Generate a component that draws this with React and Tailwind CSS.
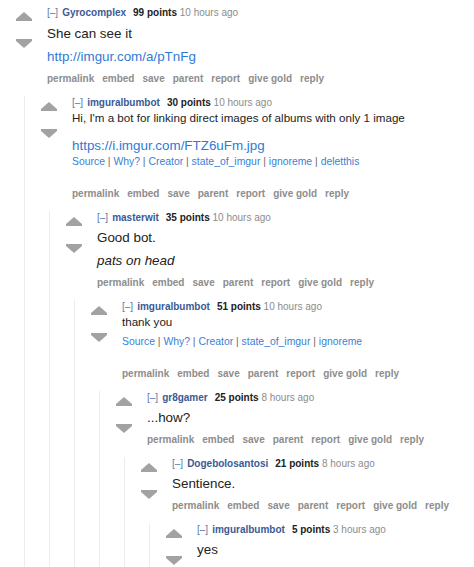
import React from 'react';

const FONT = { fontFamily: '"Liberation Sans", Arial, sans-serif' };

const ACTIONS = ['permalink', 'embed', 'save', 'parent', 'report', 'give gold', 'reply'];

function UpArrow() {
  return (
    <svg width="16" height="9" viewBox="0 0 16 9" className="block">
      <polygon points="8,0 16,7 16,9 0,9 0,7" fill="#a2a2a2" />
    </svg>
  );
}

function DownArrow() {
  return (
    <svg width="16" height="9" viewBox="0 0 16 9" className="block">
      <polygon points="0,0 16,0 16,2 8,9 0,2" fill="#a2a2a2" />
    </svg>
  );
}

function Tagline({ author, points, time }) {
  return (
    <div className="text-[10px] leading-[12px] h-[12px] whitespace-nowrap">
      <span className="text-[#5b78aa] mr-[4px]">[–]</span>
      <span className="font-bold text-[#3a5a96]">{author}</span>
      <span className="font-bold text-[#222] ml-[7px]">{points} points</span>
      <span className="text-[#8c8c8c]"> {time}</span>
    </div>
  );
}

function Actions() {
  return (
    <div className="mt-[8px] flex gap-[8px] text-[10px] leading-[12px] font-bold text-[#8d8d8d] whitespace-nowrap">
      {ACTIONS.map((a) => (
        <span key={a}>{a}</span>
      ))}
    </div>
  );
}

// links under the bot's replies
function BotLinks({ items, className = '' }) {
  return (
    <div className={`text-[10.4px] leading-[13px] text-[#3a7fd5] whitespace-nowrap ${className}`}>
      {items.map((it, i) => (
        <span key={it}>
          {i > 0 && <span className="text-[#6b6b6b]"> | </span>}
          {it}
        </span>
      ))}
    </div>
  );
}

function Comment({ author, points, time, children, replies, noActions }) {
  return (
    <div className="flex flex-col pt-[1px]">
      <div className="flex">
        <div className="w-[47px] shrink-0 pl-[16px] pt-[5px] flex flex-col gap-[18px]">
          <UpArrow />
          <DownArrow />
        </div>
        <div className="flex-1 min-w-0 pb-[11px] flex flex-col">
          <Tagline author={author} points={points} time={time} />
          {children}
          {!noActions && <Actions />}
        </div>
      </div>
      {replies && <div className="ml-[24px] border-l border-[#ececec]">{replies}</div>}
    </div>
  );
}

function P({ children, link, className = '' }) {
  return (
    <p
      className={`text-[13.4px] leading-[17px] whitespace-nowrap ${link ? 'text-[#2f7ad6]' : 'text-[#222]'} ${className}`}
    >
      {children}
    </p>
  );
}

export default function App() {
  const bot = ['Source', 'Why?', 'Creator', 'state_of_imgur', 'ignoreme', 'deletthis'];
  const botShort = ['Source', 'Why?', 'Creator', 'state_of_imgur', 'ignoreme'];

  return (
    <div className="w-[474px] h-[567px] overflow-hidden bg-white pt-[6px]" style={FONT}>
      <Comment
        author="Gyrocomplex"
        points="99"
        time="10 hours ago"
        replies={
          <Comment
            author="imguralbumbot"
            points="30"
            time="10 hours ago"
            replies={
              <Comment
                author="masterwit"
                points="35"
                time="10 hours ago"
                replies={
                  <Comment
                    author="imguralbumbot"
                    points="51"
                    time="10 hours ago"
                    replies={
                      <Comment
                        author="gr8gamer"
                        points="25"
                        time="8 hours ago"
                        replies={
                          <Comment
                            author="Dogebolosantosi"
                            points="21"
                            time="8 hours ago"
                            replies={
                              <Comment author="imguralbumbot" points="5" time="3 hours ago" noActions>
                                <P className="mt-[5px]">yes</P>
                              </Comment>
                            }
                          >
                            <P className="mt-[5px]">Sentience.</P>
                          </Comment>
                        }
                      >
                        <P className="mt-[5px]">...how?</P>
                      </Comment>
                    }
                  >
                    <p className="mt-[1px] text-[11.6px] leading-[15px] text-[#222]">thank you</p>
                    <BotLinks items={botShort} className="mt-[6px] mb-[12px]" />
                  </Comment>
                }
              >
                <P className="mt-[5px]">Good bot.</P>
                <P className="mt-[6px] italic">pats on head</P>
              </Comment>
            }
          >
            <p className="mt-[1px] text-[11.6px] leading-[15px] text-[#222] whitespace-nowrap">
              Hi, I'm a bot for linking direct images of albums with only 1 image
            </p>
            <P link className="mt-[12px]">https://i.imgur.com/FTZ6uFm.jpg</P>
            <BotLinks items={bot} className="mt-[1px] mb-[12px]" />
          </Comment>
        }
      >
        <P className="mt-[6px]">She can see it</P>
        <P link className="mt-[6px]">http://imgur.com/a/pTnFg</P>
      </Comment>
    </div>
  );
}
